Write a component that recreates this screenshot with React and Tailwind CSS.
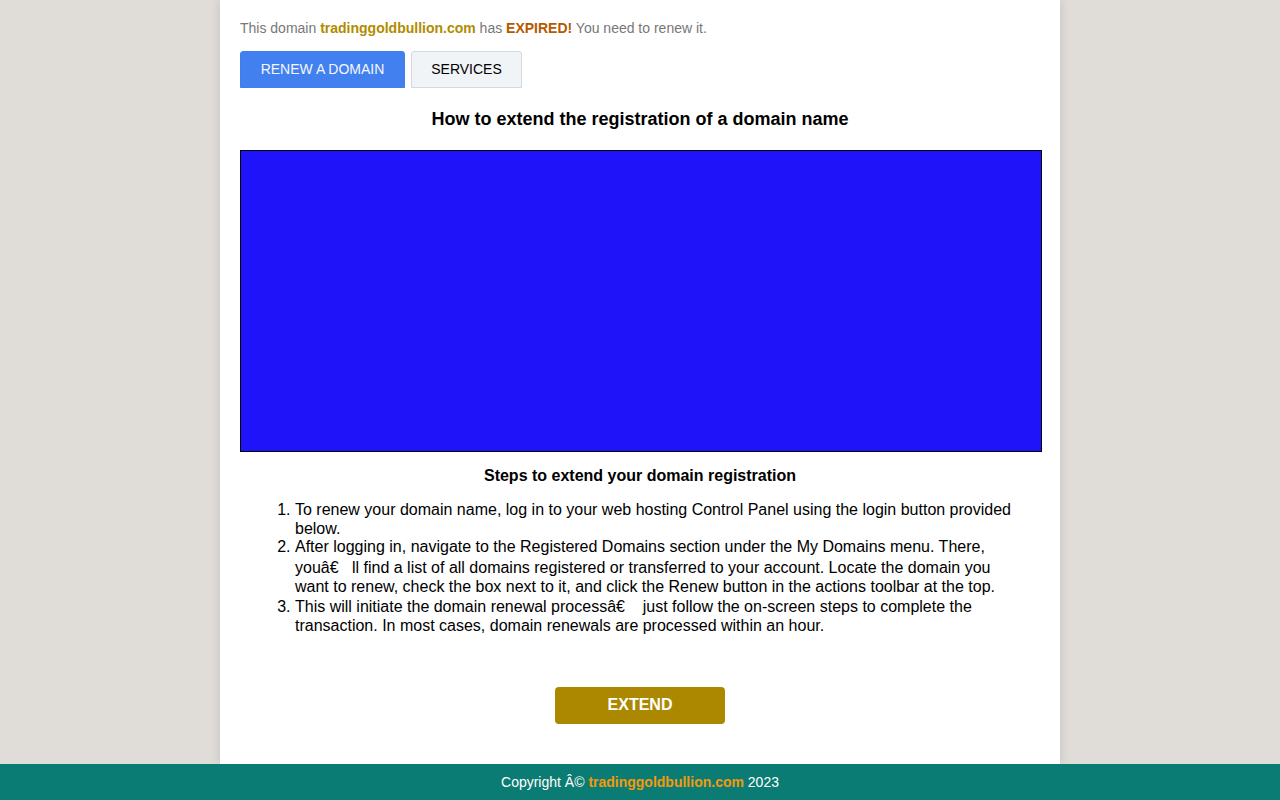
export default function App() {
  const font = { fontFamily: '"Liberation Sans", Arial, sans-serif' }
  return (
    <div className="flex min-h-screen flex-col bg-[#e0dcd8] font-['Liberation_Sans',Arial,sans-serif]" style={font}>
      <div className="mx-auto flex w-[840px] flex-1 flex-col bg-white px-5 pb-10 shadow-[0_0_10px_rgba(0,0,0,0.12)]">
        <p className="mt-[20px] text-[14px] leading-4 text-[#777]">
          This domain <b className="text-[#b08c00]">tradinggoldbullion.com</b> has <b className="text-[#b35a00]">EXPIRED!</b> You need to renew it.
        </p>

        <div className="mt-[15px] flex gap-[6px]">
          <button className="h-[37px] w-[165px] rounded-t-[3px] border border-[#3f7fe9] bg-[#4280ef] text-[14px] text-[#f4f7ff]">RENEW A DOMAIN</button>
          <button className="h-[37px] w-[111px] rounded-t-[3px] border border-[#d4d8dc] bg-[#f1f4f7] text-[14px] text-black">SERVICES</button>
        </div>

        <h1 className="mt-[21px] text-center text-[18px] font-bold leading-5 text-black">How to extend the registration of a domain name</h1>

        <div className="mt-[21px] h-[302px] w-[802px] border border-black bg-[#1f14f9]" />

        <h2 className="mt-[15px] text-center text-[16px] font-bold leading-[18px] text-black">Steps to extend your domain registration</h2>

        <ol className="mx-[15px] mt-[16px] list-decimal pl-10 text-[16px] leading-[18.5px] text-black">
          <li>To renew your domain name, log in to your web hosting Control Panel using the login button provided below.</li>
          <li>After logging in, navigate to the Registered Domains section under the My Domains menu. There, <span className="leading-[21px]">you&acirc;&euro;{'\u00a0\u00a0\u00a0'}ll find</span> a list of all domains registered or transferred to your account. Locate the domain you want to renew, check the box next to it, and click the Renew button in the actions toolbar at the top.</li>
          <li><span className="leading-[21px]">This will initiate the domain renewal process&acirc;&euro;{'\u00a0\u00a0\u00a0'} just follow</span> the on-screen steps to complete the transaction. In most cases, domain renewals are processed within an hour.</li>
        </ol>

        <div className="mt-[51px] flex justify-center">
          <button className="h-[37px] w-[170px] rounded-[4px] bg-[#ab8800] text-[16px] font-bold text-white">EXTEND</button>
        </div>
      </div>

      <footer className="flex h-9 items-center justify-center bg-[#0b7c73] text-[14px] text-white">
        Copyright &Acirc;&copy;&nbsp;<b className="text-[#f29a0e]">tradinggoldbullion.com</b>&nbsp;2023
      </footer>
    </div>
  )
}
